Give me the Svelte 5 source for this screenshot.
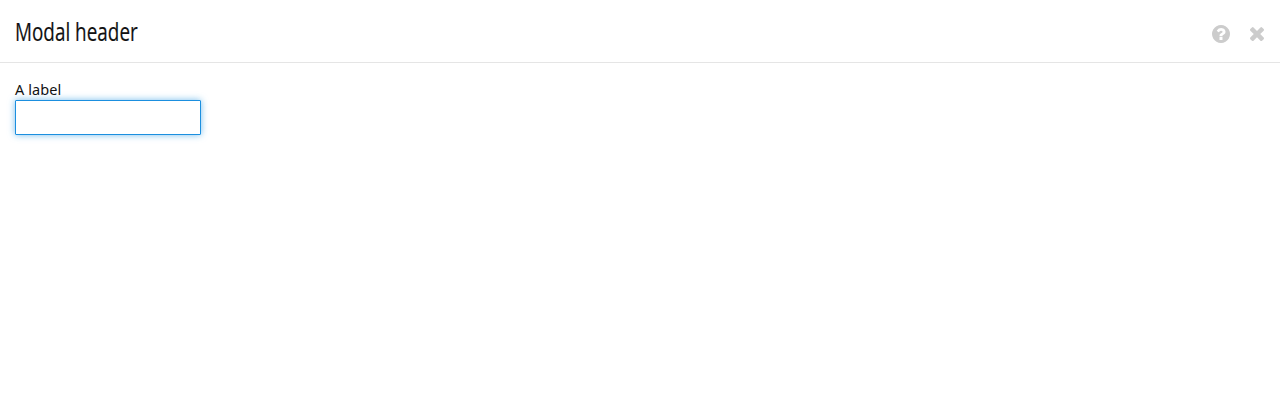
<script>
  let value = $state('');
</script>

<section class="modal">
  <header>
    <h1><span>Modal header</span></h1>
    <div class="actions">
      <button aria-label="Help">
        <svg width="18" height="18" viewBox="0 0 1536 1536"><path fill="currentColor" d="M896 1248v-192q0-14-9-23t-23-9H672q-14 0-23 9t-9 23v192q0 14 9 23t23 9h192q14 0 23-9t9-23zm256-672q0-88-55.500-163t-138.500-116-170-41q-243 0-371 213-15 24 8 42l132 100q7 6 19 6 16 0 25-12 53-68 86-92 34-24 86-24 48 0 85.500 26t37.500 59q0 38-20 61t-68 45q-63 28-115.500 86.500T640 892v36q0 14 9 23t23 9h192q14 0 23-9t9-23q0-19 21.500-49.500T972 829q32-18 49-28.500t46-35 44.500-48 28-60.500 12.500-81zm384 192q0 209-103 385.500T1153.500 1433 768 1536t-385.500-103T103 1153.500 0 768t103-385.500T382.500 103 768 0t385.500 103T1433 382.500 1536 768z"/></svg>
      </button>
      <button aria-label="Close">
        <svg width="14" height="14" viewBox="110 238 1188 1188"><path fill="currentColor" d="M1298 1202q0 40-28 68l-136 136q-28 28-68 28t-68-28L704 1112l-294 294q-28 28-68 28t-68-28l-136-136q-28-28-28-68t28-68l294-294-294-294q-28-28-28-68t28-68l136-136q28-28 68-28t68 28l294 294 294-294q28-28 68-28t68 28l136 136q28 28 28 68t-28 68L976 840l294 294q28 28 28 68z"/></svg>
      </button>
    </div>
  </header>
  <form>
    <label for="field">A label</label>
    <input id="field" type="text" bind:value />
  </form>
</section>

<style>
  :global(body) { background: #fff; }
  .modal { font-family: "Noto Sans", sans-serif; color: #111; }
  header {
    box-sizing: border-box;
    height: 63px;
    padding: 0 16px 0 15px;
    display: flex;
    justify-content: space-between;
    border-bottom: 1px solid #e5e5e5;
  }
  h1 { margin: 13px 0 0; font: 400 26px/36px "Open Sans", sans-serif; white-space: nowrap; }
  h1 span { display: inline-block; transform: scaleX(0.727); transform-origin: left; -webkit-text-stroke: 0.2px currentColor; }
  .actions { display: flex; gap: 20px; align-items: center; padding-top: 6px; }
  button { display: flex; padding: 0; border: 0; background: none; color: #ccc; }
  form { padding: 16px 15px; display: flex; flex-direction: column; align-items: flex-start; }
  label { font-size: 14.5px; line-height: 21px; letter-spacing: 0.1px; }
  input {
    box-sizing: border-box;
    width: 186px;
    height: 35px;
    padding: 6px 8px;
    border: 1px solid #1b8fdf;
    border-radius: 1px;
    outline: 0;
    box-shadow: 0 0 7px rgba(26, 143, 224, 0.6);
    font: inherit;
  }
</style>
